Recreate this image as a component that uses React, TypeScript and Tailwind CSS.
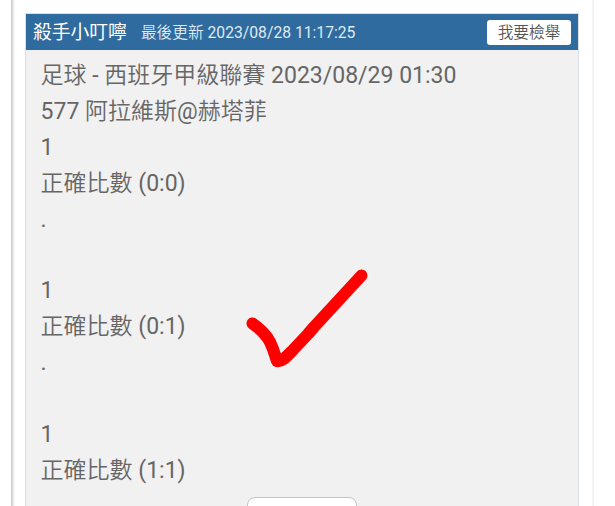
const lines = [
  '足球 - 西班牙甲級聯賽 2023/08/29 01:30',
  '577 阿拉維斯@赫塔菲',
  '1',
  '正確比數 (0:0)',
  '.',
  '',
  '1',
  '正確比數 (0:1)',
  '.',
  '',
  '1',
  '正確比數 (1:1)',
];

function Header() {
  return (
    <header className="flex h-[36px] shrink-0 items-center bg-[#2f6b9e] pl-[7px] pr-[7px]">
      <h1 className="mt-[2px] whitespace-nowrap font-[Roboto,'Noto_Sans_CJK_TC',sans-serif] text-[18.8px] leading-[36px] font-normal text-white">
        殺手小叮嚀
      </h1>
      <span className="ml-[14px] mt-[2px] whitespace-nowrap text-[15.7px] leading-[36px] text-[#dfeaf4]">
        最後更新 2023/08/28 11:17:25
      </span>
      <button className="ml-auto h-[25px] w-[84px] rounded-[3px] bg-white text-[15.7px] leading-[25px] whitespace-nowrap text-[#555]">
        我要檢舉
      </button>
    </header>
  );
}

export default function App() {
  return (
    <div className="relative flex h-[506px] w-[615px] overflow-hidden bg-white font-[Roboto,'Noto_Sans_CJK_TC_DemiLight','Noto_Sans_CJK_TC_Light','Noto_Sans_CJK_TC',sans-serif]">
      <div className="w-[11px] shrink-0" />
      <div className="w-[4px] shrink-0 bg-linear-to-r from-[#c8c8c8] to-white" />
      <main className="ml-[10px] mt-[13px] flex w-[554px] shrink-0 flex-col border border-b-0 border-[#d9dfe5] bg-[#f1f1f1]">
        <Header />
        <div className="pl-[14.6px] pt-[8px]">
          {lines.map((line, i) => (
            <p key={i} className="h-[35.9px] whitespace-nowrap text-[23px] leading-[35.9px] text-[#666]">
              {line}
            </p>
          ))}
        </div>
      </main>
      <div className="ml-[13px] w-[2px] shrink-0 bg-[#f4f4f4]" />
      <svg className="absolute left-[230px] top-[255px]" width="160" height="125" viewBox="0 0 160 125" fill="none">
        <path
          d="M22.500 68.500 C29 73 36 79 40 87 C44 95 45 101 47 106 C52 107 56 102 62 96 L78 79 L84 72 L131.500 20.500"
          stroke="#ff0000"
          strokeWidth="12"
          strokeLinecap="round"
          strokeLinejoin="round"
        />
      </svg>
      <div className="absolute left-[247px] top-[497px] h-[30px] w-[110px] rounded-[8px] border border-[#c4c4c4] bg-white" />
    </div>
  );
}
